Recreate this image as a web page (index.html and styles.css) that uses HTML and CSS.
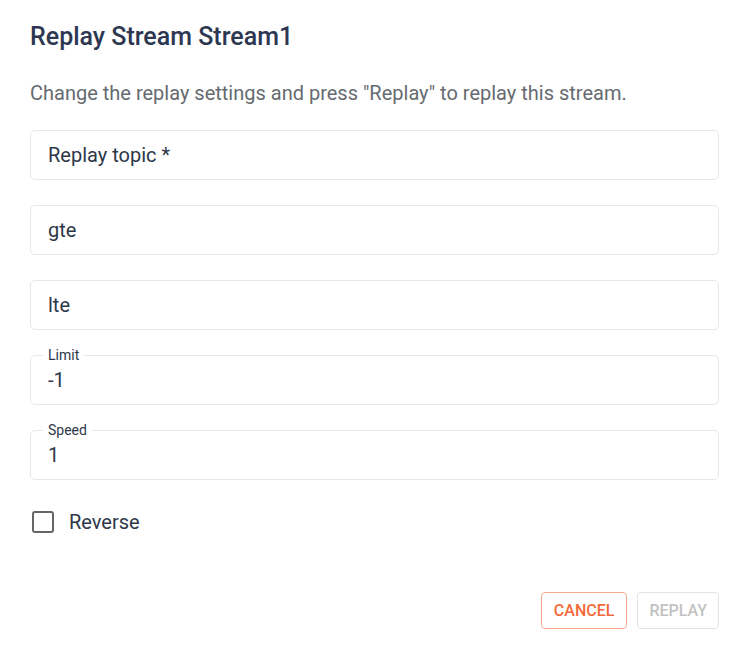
FILE: index.html
```html
<!DOCTYPE html>
<html>
<head>
<meta charset="utf-8">
<link rel="stylesheet" href="styles.css">
</head>
<body>
<div class="dialog">
  <h2 class="title">Replay Stream Stream1</h2>
  <p class="desc">Change the replay settings and press "Replay" to replay this stream.</p>
  <div class="fields">
    <div class="field"><span class="placeholder">Replay topic *</span></div>
    <div class="field"><span class="placeholder">gte</span></div>
    <div class="field"><span class="placeholder">lte</span></div>
    <fieldset class="field outlined"><legend>Limit</legend><span class="value">-1</span></fieldset>
    <fieldset class="field outlined"><legend>Speed</legend><span class="value">1</span></fieldset>
  </div>
  <label class="check"><span class="box"></span><span>Reverse</span></label>
  <div class="actions">
    <button class="btn cancel">CANCEL</button>
    <button class="btn replay" disabled>REPLAY</button>
  </div>
</div>
</body>
</html>
```

FILE: styles.css
```css
html, body {
  margin: 0;
  background: #ffffff;
}
body {
  font-family: Roboto, "Liberation Sans", sans-serif;
  color: #2d3748;
}
.dialog {
  width: 743px;
  height: 646px;
  box-sizing: border-box;
  padding: 21px 24px 0 30px;
}
.title {
  margin: 0;
  font-size: 25px;
  font-weight: 500;
  line-height: 32px;
  color: #2d3752;
}
.desc {
  margin: 28px 0 0;
  font-size: 20px;
  line-height: 24px;
  color: #666b70;
}
.fields {
  margin-top: 25px;
  display: flex;
  flex-direction: column;
  gap: 25px;
}
.field {
  box-sizing: border-box;
  height: 50px;
  margin: 0;
  border: 1px solid #e6e7ea;
  border-radius: 5px;
  padding: 0 17px;
  display: flex;
  align-items: center;
  font-size: 20px;
  color: #2d3748;
  min-width: 0;
}
.outlined {
  display: block;
  margin-top: -7px;
  height: 57px;
}
.outlined legend {
  font-size: 14px;
  line-height: 14px;
  padding: 0 5px;
  margin-left: -5px;
  color: #2d3748;
}
.outlined .value {
  display: block;
  line-height: 24px;
  margin-top: 6px;
}
.check {
  display: flex;
  align-items: center;
  gap: 15px;
  margin-top: 30px;
  margin-left: 2px;
  font-size: 20px;
  line-height: 24px;
  color: #2d3748;
}
.box {
  box-sizing: border-box;
  width: 22px;
  height: 22px;
  border: 2.5px solid #666666;
  border-radius: 3px;
}
.actions {
  display: flex;
  justify-content: flex-end;
  gap: 10px;
  margin-top: 58px;
}
.btn {
  font-family: Roboto, "Liberation Sans", sans-serif;
  font-size: 16px;
  font-weight: 500;
  height: 37px;
  padding: 0 12px;
  border-radius: 4px;
  background: #fff;
}
.cancel {
  color: #f26a3b;
  border: 1px solid #f6a98c;
}
.replay {
  padding: 0 11px;
  color: #c2c2c2;
  border: 1px solid #e3e3e3;
}
```
